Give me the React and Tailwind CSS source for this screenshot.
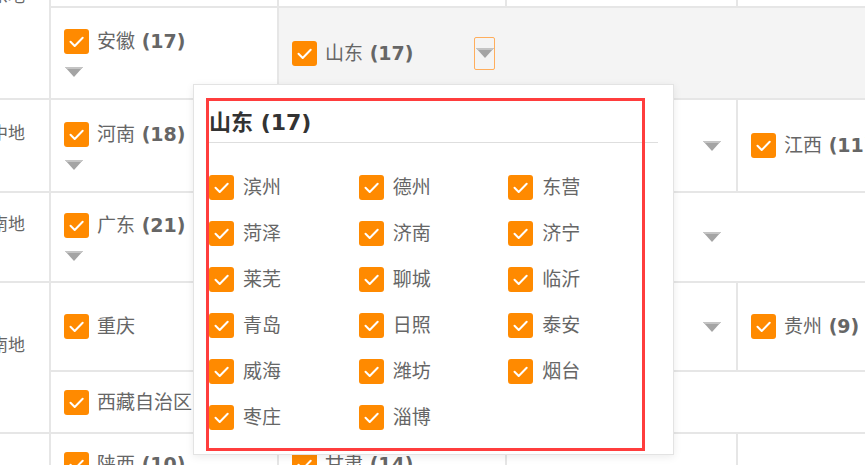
import clsx from "clsx";

const FONT = "font-['DejaVu_Sans','Noto_Sans_CJK_SC',sans-serif]";

function Check() {
  return (
    <span className="flex h-[25px] w-[25px] shrink-0 items-center justify-center rounded-[3px] bg-[#ff8a00]">
      <svg width="25" height="25" viewBox="0 0 25 25">
        <path
          d="M6.5 12.8l4.2 4.2 8-8.3"
          fill="none"
          stroke="#fff"
          strokeWidth="2"
          strokeLinecap="round"
          strokeLinejoin="round"
        />
      </svg>
    </span>
  );
}

function Arrow({ className }) {
  return (
    <svg width="18" height="10" viewBox="0 0 18 10" className={className}>
      <path d="M0 0H18L9 10Z" fill="#a4a4a4" />
      <path d="M0 0H18L16.3 2H1.7Z" fill="#c4c4c4" />
    </svg>
  );
}

function Toggle({ active }) {
  return (
    <span
      className={clsx(
        "ml-auto flex h-[33px] w-[21px] shrink-0 items-center justify-center rounded-[2px] border",
        active ? "border-[#ffae5c]" : "border-transparent"
      )}
    >
      <Arrow />
    </span>
  );
}

function Name({ name, count }) {
  return (
    <span className="whitespace-nowrap text-[19px] leading-[25px] text-[#666]">
      {name}
      {count != null && <b className="font-bold"> ({count})</b>}
    </span>
  );
}

// first column: toggle drops under the name
function StackCell({ name, count, toggle = true }) {
  return (
    <div className="flex w-[228px] shrink-0 flex-col justify-center border-l-2 border-[#e6e6e6] pl-[13px]">
      <div className="flex items-center gap-[8px]">
        <Check />
        <Name name={name} count={count} />
      </div>
      {toggle && <Arrow className="ml-[1px] mt-[13px]" />}
    </div>
  );
}

function Cell({ name, count, width, toggle = true, active, pr = "pr-[14px]", extra }) {
  return (
    <div
      className={clsx(
        "flex shrink-0 items-center gap-[8px] border-l-2 border-[#e6e6e6] pl-[13px]",
        width,
        pr,
        extra
      )}
    >
      <Check />
      <Name name={name} count={count} />
      {toggle && <Toggle active={active} />}
    </div>
  );
}

function Region({ label, children }) {
  return (
    <div className="flex border-b-2 border-[#e6e6e6]">
      <div className="flex w-[75px] shrink-0 items-center pr-[12px] text-[17px] leading-[25px] text-[#666]">
        {label}
      </div>
      <div className="flex min-w-0 flex-1 flex-col divide-y-2 divide-[#e6e6e6]">
        {children}
      </div>
    </div>
  );
}

const shandong = [
  "滨州", "德州", "东营",
  "菏泽", "济南", "济宁",
  "莱芜", "聊城", "临沂",
  "青岛", "日照", "泰安",
  "威海", "潍坊", "烟台",
  "枣庄", "淄博",
];

export default function App() {
  return (
    <div className={clsx("relative h-[465px] w-[865px] overflow-hidden bg-white", FONT)}>
      <div className="ml-[-26px] mt-[-80px] w-[1000px]">
        <Region label="华东地区">
          <div className="flex h-[88px]">
            <StackCell name="上海" count={16} />
            <Cell name="江苏" count={13} width="w-[228px]" pr="pr-[11px]" />
            <Cell name="浙江" count={11} width="w-[231px]" />
            <Cell name="福建" count={9} width="flex-1" />
          </div>
          <div className="flex h-[90px]">
            <StackCell name="安徽" count={17} />
            <div className="flex flex-1 bg-[#f4f4f4]">
              <Cell name="山东" count={17} width="w-[228px]" pr="pr-[10px]" active />
            </div>
          </div>
        </Region>

        <Region label="华中地区">
          <div className="flex h-[91px]">
            <StackCell name="河南" count={18} />
            <Cell name="湖北" count={17} width="w-[228px]" pr="pr-[11px]" />
            <Cell name="湖南" count={14} width="w-[231px]" />
            <Cell name="江西" count={11} width="flex-1" />
          </div>
        </Region>

        <Region label="华南地区">
          <div className="flex h-[88px]">
            <StackCell name="广东" count={21} />
            <Cell name="广西" count={14} width="w-[228px]" pr="pr-[11px]" />
            <Cell name="海南" count={4} width="w-[231px]" />
          </div>
        </Region>

        <Region label="西南地区">
          <div className="flex h-[89px]">
            <StackCell name="重庆" toggle={false} />
            <Cell name="四川" count={21} width="w-[228px]" pr="pr-[11px]" />
            <Cell name="云南" count={16} width="w-[231px]" />
            <Cell name="贵州" count={9} width="flex-1" />
          </div>
          <div className="flex h-[60px]">
            <Cell name="西藏自治区" width="flex-1" toggle={false} />
          </div>
        </Region>

        <Region label="西北地区">
          <div className="flex h-[86px]">
            <StackCell name="陕西" count={10} />
            <div className="flex w-[228px] shrink-0 flex-col justify-center border-l-2 border-[#e6e6e6] pl-[13px]">
              <div className="flex items-center gap-[8px]">
                <Check />
                <Name name="甘肃" count={14} />
              </div>
              <Arrow className="ml-[1px] mt-[13px]" />
            </div>
            <Cell name="青海" count={8} width="w-[231px]" extra="pt-[14px]" />
            <Cell name="宁夏" count={5} width="flex-1" extra="pt-[14px]" />
          </div>
          <div className="flex h-[90px]">
            <Cell name="新疆" count={14} width="flex-1" />
          </div>
        </Region>
      </div>

      {/* 山东 dropdown */}
      <div className="absolute left-[193px] top-[84px] h-[371px] w-[481px] border border-[#e3e3e3] bg-white px-[15px] pt-[26px] shadow-[0_2px_8px_rgba(0,0,0,0.08)]">
        <div className="border-b border-[#dedede] pb-[7px] text-[22px] font-bold leading-[24px] text-[#333]">
          山东 (17)
        </div>
        <div className="mt-[32px] grid grid-cols-3 gap-y-[21px]">
          {shandong.map((c) => (
            <div key={c} className="flex items-center gap-[9px]">
              <Check />
              <span className="text-[19px] leading-[25px] text-[#666]">{c}</span>
            </div>
          ))}
        </div>
        <div className="pointer-events-none absolute left-[12px] top-[13px] h-[353px] w-[439px] border-[3px] border-[#ff3d3d]" />
      </div>
    </div>
  );
}
